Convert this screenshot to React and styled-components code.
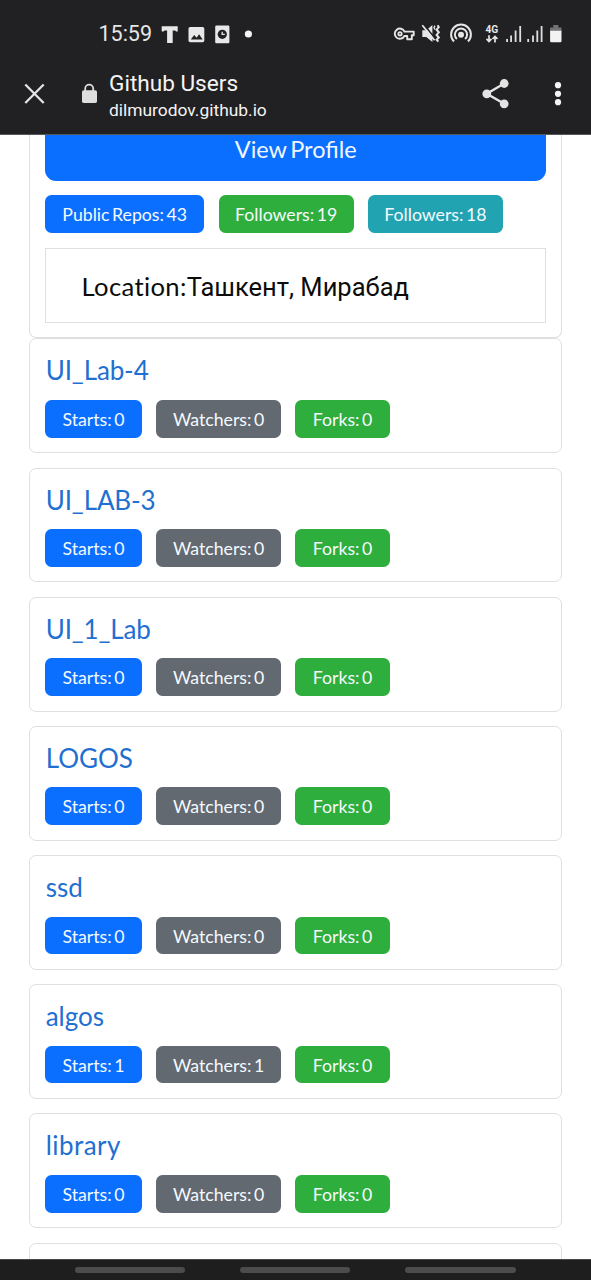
import React from "react";
import styled, { createGlobalStyle } from "styled-components";

const GlobalStyle = createGlobalStyle`
  * { box-sizing: border-box; }
  html, body { margin: 0; background: #fff; }
  body { overflow: hidden; font-family: Lato, Roboto, sans-serif; }
`;

const Screen = styled.div`
  width: 591px;
  height: 1280px;
  display: flex;
  flex-direction: column;
  overflow: hidden;
`;

const Header = styled.header`
  flex: none;
  height: 135px;
  background: #212123;
  border-bottom: 1px solid #55585c;
  color: #f4f4f4;
  font-family: Roboto, sans-serif;
`;

const StatusBar = styled.div`
  height: 58px;
  padding: 9px 28px 0 98.5px;
  display: flex;
  justify-content: space-between;
`;

const StatusGroup = styled.div`
  display: flex;
  align-items: center;
`;

const Clock = styled.span`
  width: 62.5px;
  padding-top: 1px;
  font-size: 21.5px;
  line-height: 48px;
  color: #e6e6e6;
  white-space: nowrap;
`;

const Toolbar = styled.div`
  height: 76px;
  display: flex;
  align-items: center;
  padding: 0 20px 5px 22px;
`;

const PageInfo = styled.div`
  flex: 1;
  margin-left: 11px;
  padding-top: 5px;
`;

const PageTitle = styled.div`
  font-size: 22.6px;
  line-height: 27px;
`;

const PageHost = styled.div`
  font-size: 17.4px;
  line-height: 26px;
`;

const Icon = styled.svg`
  display: block;
  flex: none;
  margin-left: ${(p) => p.$gap || 0}px;
`;

const Content = styled.main`
  flex: 1;
  min-height: 0;
  overflow: hidden;
  padding: 0 29px 0 29.4px;
`;

const Card = styled.section`
  border: 1px solid #dfdfdf;
  border-radius: 7px;
  padding: 14px 14.6px;
`;

const ProfileCard = styled(Card)`
  height: 203.4px;
  border-top: 0;
  border-radius: 0 0 7px 7px;
  padding-top: 0;
`;

const ProfileButton = styled.a`
  display: block;
  height: 46px;
  border-radius: 0 0 11px 11px;
  background: #0a6fff;
  color: #f2f8ff;
  font-size: 23.5px;
  line-height: 28px;
  word-spacing: -2.4px;
  text-align: center;
`;

const RepoCard = styled(Card)`
  height: 114.8px;
  margin-bottom: 14.38px;
`;

const RepoLink = styled.a`
  display: block;
  height: 46.5px;
  padding-left: 0.7px;
  font-size: 26px;
  line-height: 35px;
  letter-spacing: ${(p) => p.$tracking || 0}px;
  color: #1f70d0;
`;

const Badges = styled.div`
  display: flex;
  gap: 14.4px;
  margin-top: ${(p) => p.$top || 0}px;
`;

const tones = { blue: "#0a6fff", gray: "#636970", green: "#2eae3c", teal: "#22a3b2" };

const Badge = styled.span`
  width: ${(p) => p.$width}px;
  height: 37.7px;
  border-radius: 6.5px;
  background: ${(p) => tones[p.$tone]};
  color: #f5faff;
  font-size: 17.7px;
  line-height: 39.6px;
  word-spacing: -2px;
  text-align: center;
  white-space: nowrap;
`;

const Location = styled.div`
  height: 75px;
  margin-top: 15px;
  border: 1px solid #dfdfdf;
  padding-left: 35.5px;
  color: #0c0c0c;
  font-size: 25.6px;
  line-height: 74px;
  font-variant-ligatures: none;
  letter-spacing: 0.35px;
  white-space: nowrap;
`;

const Place = styled.span`
  font-family: Roboto, sans-serif;
  font-size: 25.5px;
  letter-spacing: 0;
`;

const NavBar = styled.nav`
  flex: none;
  height: 21px;
  border-top: 1px solid #48484a;
  background: #1e1e1e;
  display: flex;
  gap: 55px;
  padding: 7px 0 0 75px;
`;

const NavHandle = styled.span`
  width: 110.2px;
  height: 6px;
  border-radius: 3px;
  background: #4c4c4c;
`;

const repos = [
  { name: "UI_Lab-4", count: 0, tracking: -0.12 },
  { name: "UI_LAB-3", count: 0, tracking: -0.12 },
  { name: "UI_1_Lab", count: 0, tracking: -0.15 },
  { name: "LOGOS", count: 0 },
  { name: "ssd", count: 0 },
  { name: "algos", count: 1 },
  { name: "library", count: 0, tracking: 0.45 },
];

function NotificationIcons() {
  return (
    <Icon width="96" height="24" viewBox="161 22 96 24" fill="#e8e8e8">
      <path d="M161.7 26.2h16v5.4h-1.5l-1.2-1h-2.3v12.3h-5.6v-12.3h-2.4l-1.4 1h-1.6z" />
      <rect x="188.5" y="27" width="15.8" height="15.3" rx="1.7" />
      <path d="M190.8 39.5l3.4-4.5 2.4 2.8 2.5-3.6 3.6 5.3z" fill="#212123" />
      <rect x="215.2" y="25.5" width="14.2" height="17.8" rx="1.2" />
      <circle cx="222.3" cy="34.3" r="4.6" fill="#212123" />
      <path d="M222.2 31.8v2.6h2.6" fill="none" stroke="#e8e8e8" strokeWidth="1.3" />
      <circle cx="248.4" cy="34" r="3.6" fill="#f5f5f5" />
    </Icon>
  );
}

function SystemIcons() {
  return (
    <Icon width="170" height="26" viewBox="393 21 170 26" fill="#e6e6e6">
      <g fill="none" stroke="#e6e6e6" strokeWidth="1.9" strokeLinejoin="round">
        <path d="M404.5 31.6H413.7V35.2H411.8V39.2H407.2V36H404.4A5.1 5.1 0 1 1 404.5 31.6z" />
        <circle cx="400" cy="33.8" r="1.7" strokeWidth="1.8" />
      </g>
      <path d="M422.3 30.3h4l6.1-5.2v16.8l-6.1-4.9h-4z" />
      <path d="M423.6 24.1l11.6 14.6" stroke="#212123" strokeWidth="1.6" />
      <path d="M422.3 25.3l12.2 15" stroke="#e6e6e6" strokeWidth="1.7" />
      <path d="M437.6 25.2l1.2 2-2.2 2.5 2.2 2.6-2.2 2.6 2.2 2.6-2.2 2.3 1.8 1.8" fill="none" stroke="#e6e6e6" strokeWidth="2" />
      <path d="M435 25.6l-1 2 1 2" fill="none" stroke="#e6e6e6" strokeWidth="1.3" />
      <circle cx="461" cy="34.7" r="3" />
      <path d="M456.9 39.1a6.1 6.1 0 1 1 8.2 0 M454 41.5a9.9 9.9 0 1 1 14 0" fill="none" stroke="#e6e6e6" strokeWidth="2" />
      <text x="485.5" y="32.8" fontSize="10.2" fontWeight="700" fontFamily="Roboto, sans-serif" textLength="12.7">4G</text>
      <path d="M489 35.3v6 M486.5 38.9l2.5 2.6 2.5-2.6 M495 42.6v-6 M492.5 39l2.5-2.6 2.5 2.6" fill="none" stroke="#e6e6e6" strokeWidth="1.7" />
      <path d="M507.1 39v3 M511.1 35.4v6.6 M515.6 30.5v11.5 M520.2 26v16 M528.2 39v3 M533 35.4v6.6 M537.3 30.5v11.5 M541.6 26v16" stroke="#dedede" strokeWidth="1.8" />
      <path d="M550.1 27.5h3.2v-2.4h5.1v2.4h3.1v4h-11.4z" fill="#737373" />
      <path d="M550.1 30.8h11.4v10.3a1.2 1.2 0 0 1-1.2 1.2h-9a1.2 1.2 0 0 1-1.2-1.2z" fill="#f2f2f2" />
    </Icon>
  );
}

export default function App() {
  return (
    <Screen>
      <GlobalStyle />
      <Header>
        <StatusBar>
          <StatusGroup>
            <Clock>15:59</Clock>
            <NotificationIcons />
          </StatusGroup>
          <StatusGroup>
            <SystemIcons />
          </StatusGroup>
        </StatusBar>
        <Toolbar>
          <Icon width="25" height="26" viewBox="22 81 25 26" stroke="#e4e4e4" strokeWidth="2.3">
            <path d="M25.3 84.5l18.4 18.5M43.7 84.5l-18.4 18.5" />
          </Icon>
          <Icon width="18" height="24" viewBox="80 82 18 24" $gap={33}>
            <path d="M85.2 91v-2.4a4 4 0 0 1 8 0V91" fill="none" stroke="#dedede" strokeWidth="1.8" />
            <rect x="82" y="90.2" width="15" height="12.8" rx="1.8" fill="#dedede" />
          </Icon>
          <PageInfo>
            <PageTitle>Github Users</PageTitle>
            <PageHost>dilmurodov.github.io</PageHost>
          </PageInfo>
          <Icon width="30" height="32" viewBox="481 78 30 32" fill="#e4e4e4">
            <path d="M504.2 83.5L486.8 93.8l17.4 10" fill="none" stroke="#e4e4e4" strokeWidth="2.4" />
            <circle cx="504.2" cy="83.5" r="4.4" />
            <circle cx="486.8" cy="93.8" r="4.4" />
            <circle cx="504.2" cy="103.8" r="4.4" />
          </Icon>
          <Icon width="26" height="30" viewBox="545 79 26 30" fill="#f5f5f5" $gap={34}>
            <circle cx="558" cy="85.2" r="3.1" />
            <circle cx="558" cy="93.8" r="3.1" />
            <circle cx="558" cy="102.2" r="3.1" />
          </Icon>
        </Toolbar>
      </Header>
      <Content>
        <ProfileCard>
          <ProfileButton>View Profile</ProfileButton>
          <Badges $top={14}>
            <Badge $tone="blue" $width={159.4}>Public Repos: 43</Badge>
            <Badge $tone="green" $width={134.8}>Followers: 19</Badge>
            <Badge $tone="teal" $width={134.8}>Followers: 18</Badge>
          </Badges>
          <Location>
            Location:<Place>Ташкент, Мирабад</Place>
          </Location>
        </ProfileCard>
        {repos.map(({ name, count, tracking }) => (
          <RepoCard key={name}>
            <RepoLink $tracking={tracking}>{name}</RepoLink>
            <Badges>
              <Badge $tone="blue" $width={97}>Starts: {count}</Badge>
              <Badge $tone="gray" $width={124.5}>Watchers: {count}</Badge>
              <Badge $tone="green" $width={94.6}>Forks: 0</Badge>
            </Badges>
          </RepoCard>
        ))}
        <RepoCard />
      </Content>
      <NavBar>
        <NavHandle />
        <NavHandle />
        <NavHandle />
      </NavBar>
    </Screen>
  );
}
